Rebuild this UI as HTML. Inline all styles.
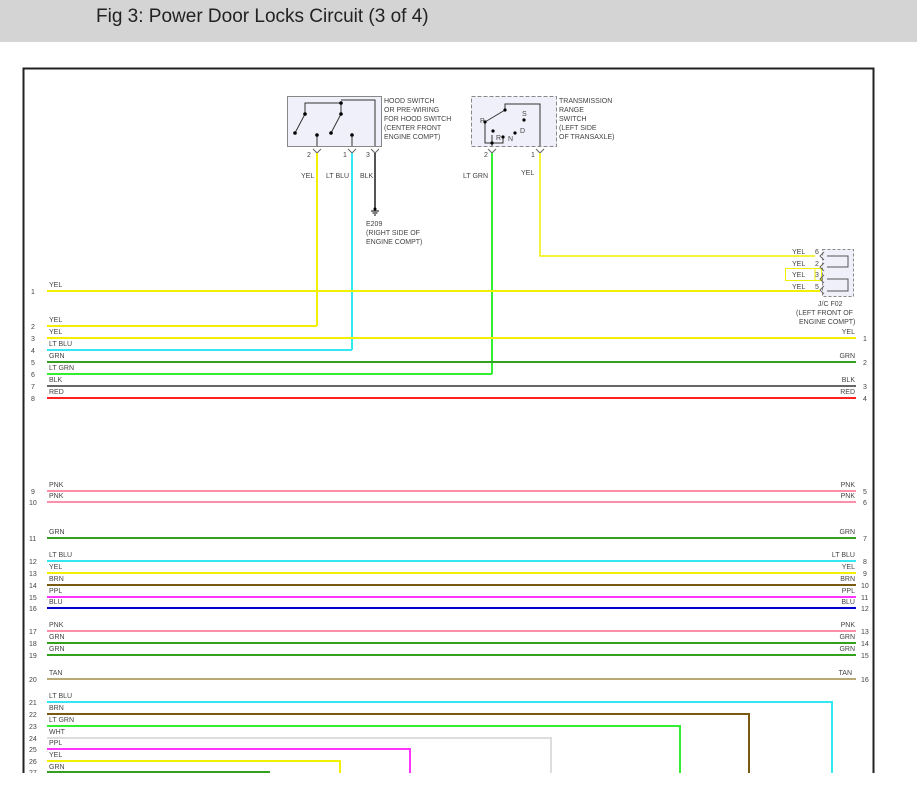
<!DOCTYPE html>
<html><head><meta charset="utf-8"><style>
html,body{margin:0;padding:0;background:#fff;width:917px;height:800px;overflow:hidden}
.hdr{position:absolute;left:0;top:0;width:917px;height:42px;background:#d4d4d4}
.hdr span{position:absolute;left:96px;top:6px;font:19px "Liberation Sans",sans-serif;color:#222}
svg{position:absolute;left:0;top:0}
text{font-family:"Liberation Sans",sans-serif;font-size:7px;fill:#444}
</style></head><body>
<div class="hdr"><span>Fig 3: Power Door Locks Circuit (3 of 4)</span></div>
<svg width="917" height="800" viewBox="0 0 917 800">
<defs><clipPath id="c"><rect x="0" y="0" width="917" height="773"/></clipPath></defs>
<g clip-path="url(#c)">
<rect x="23.5" y="68.5" width="850" height="760" fill="none" stroke="#222" stroke-width="2"/>
<rect x="287.5" y="96.5" width="94" height="50" fill="#f0f0fa" stroke="#888"/>
<g stroke="#333" stroke-width="1" fill="none">
<path d="M305 114 V103 H341 V114 M305 114 L295 133 M341 103 V114 L331 133 M317 135 V146 M352 135 V146 M375 146 V100 H341"/>
</g>
<g fill="#000"><circle cx="305" cy="114" r="1.8"/><circle cx="341" cy="103" r="1.8"/><circle cx="341" cy="114" r="1.8"/><circle cx="295" cy="133" r="1.8"/><circle cx="331" cy="133" r="1.8"/><circle cx="317" cy="135" r="1.8"/><circle cx="352" cy="135" r="1.8"/></g>
<g font-size="7"><text x="384" y="103">HOOD SWITCH</text><text x="384" y="112">OR PRE-WIRING</text><text x="384" y="121">FOR HOOD SWITCH</text><text x="384" y="130">(CENTER FRONT</text><text x="384" y="139">ENGINE COMPT)</text>
<text x="307" y="157">2</text><text x="343" y="157">1</text><text x="366" y="157">3</text>
<text x="301" y="178">YEL</text><text x="326" y="178">LT BLU</text><text x="360" y="178">BLK</text>
<text x="366" y="226">E209</text><text x="366" y="235">(RIGHT SIDE OF</text><text x="366" y="244">ENGINE COMPT)</text></g>
<g stroke="#666" fill="none"><path d="M313 149 l4 4 l4 -4 M348 149 l4 4 l4 -4 M371 149 l4 4 l4 -4"/></g>
<rect x="471.5" y="96.5" width="85" height="50" fill="#f0f0fa" stroke="#888" stroke-dasharray="4,2"/>
<g stroke="#333" fill="none"><path d="M485 122 V143 H492 V146 M485 122 L505 110 V104 H540 V146 M492 135 V146 M492 143 H503 V137"/></g>
<g fill="#000"><circle cx="485" cy="122" r="1.6"/><circle cx="505" cy="110" r="1.6"/><circle cx="524" cy="120" r="1.6"/><circle cx="493" cy="131" r="1.6"/><circle cx="503" cy="137" r="1.6"/><circle cx="515" cy="133" r="1.6"/><circle cx="492" cy="143" r="1.6"/></g>
<g font-size="7"><text x="480" y="123">P</text><text x="522" y="116">S</text><text x="496" y="140">R</text><text x="508" y="141">N</text><text x="520" y="133">D</text>
<text x="559" y="103">TRANSMISSION</text><text x="559" y="112">RANGE</text><text x="559" y="121">SWITCH</text><text x="559" y="130">(LEFT SIDE</text><text x="559" y="139">OF TRANSAXLE)</text>
<text x="484" y="157">2</text><text x="531" y="157">1</text><text x="463" y="178">LT GRN</text><text x="521" y="175">YEL</text></g>
<g stroke="#666" fill="none"><path d="M488 149 l4 4 l4 -4 M536 149 l4 4 l4 -4"/></g>
<line x1="317" y1="153" x2="317" y2="326" stroke="#f0f000" stroke-width="2"/>
<line x1="352" y1="153" x2="352" y2="350" stroke="#33e8f0" stroke-width="2"/>
<line x1="375" y1="153" x2="375" y2="208" stroke="#555" stroke-width="2"/>
<path d="M371 211 h8 M372.5 213 h5 M374 215 h2" stroke="#000"/>
<circle cx="375" cy="209" r="1.5"/>
<line x1="492" y1="153" x2="492" y2="374" stroke="#33ee33" stroke-width="2"/>
<path d="M540 153 V256 H815" stroke="#f0f000" stroke-width="1.5" fill="none"/>
<rect x="822.5" y="249.5" width="31" height="47" fill="#f0f0fa" stroke="#888" stroke-dasharray="3,2"/>
<path d="M827 256 H848 V267 H827 M827 279 H848 V291 H827" stroke="#555" fill="none"/>
<rect x="785.5" y="268.5" width="36" height="12" fill="none" stroke="#f0f000"/>
<g font-size="7"><text x="792" y="254">YEL</text><text x="815" y="254">6</text><text x="792" y="266">YEL</text><text x="815" y="266">2</text><text x="792" y="277">YEL</text><text x="815" y="277">3</text><text x="792" y="289">YEL</text><text x="815" y="289">5</text>
<text x="818" y="306">J/C F02</text><text x="796" y="315">(LEFT FRONT OF</text><text x="799" y="324">ENGINE COMPT)</text></g>
<g stroke="#666" fill="none"><path d="M824 252 l-4 4 l4 4 M824 263 l-4 4 l4 4 M824 275 l-4 4 l4 4 M824 286 l-4 4 l4 4"/></g>
<line x1="789" y1="291" x2="815" y2="291" stroke="#f0f000" stroke-width="1.5"/>
<line x1="815" y1="280" x2="815" y2="268" stroke="#f0f000"/>
<g stroke-width="2" fill="none">
<line x1="47" y1="291" x2="820" y2="291" stroke="#f0f000"/>
<line x1="47" y1="326" x2="317" y2="326" stroke="#f0f000"/>
<line x1="47" y1="338" x2="856" y2="338" stroke="#f0f000"/>
<line x1="47" y1="350" x2="352" y2="350" stroke="#33e8f0"/>
<line x1="47" y1="362" x2="856" y2="362" stroke="#33a020"/>
<line x1="47" y1="374" x2="492" y2="374" stroke="#33ee33"/>
<line x1="47" y1="386" x2="856" y2="386" stroke="#666"/>
<line x1="47" y1="398" x2="856" y2="398" stroke="#ff2020"/>
<line x1="47" y1="491" x2="856" y2="491" stroke="#ff8fa8"/>
<line x1="47" y1="502" x2="856" y2="502" stroke="#ff8fa8"/>
<line x1="47" y1="538" x2="856" y2="538" stroke="#33a020"/>
<line x1="47" y1="561" x2="856" y2="561" stroke="#33e8f0"/>
<line x1="47" y1="573" x2="856" y2="573" stroke="#f0f000"/>
<line x1="47" y1="585" x2="856" y2="585" stroke="#7a5a10"/>
<line x1="47" y1="597" x2="856" y2="597" stroke="#ff33ff"/>
<line x1="47" y1="608" x2="856" y2="608" stroke="#0000cc"/>
<line x1="47" y1="631" x2="856" y2="631" stroke="#ff8fa8"/>
<line x1="47" y1="643" x2="856" y2="643" stroke="#33a020"/>
<line x1="47" y1="655" x2="856" y2="655" stroke="#33a020"/>
<line x1="47" y1="679" x2="856" y2="679" stroke="#b8a878"/>
<path d="M47 702 H832 V780" stroke="#33e8f0"/>
<path d="M47 714 H749 V780" stroke="#7a5a10"/>
<path d="M47 726 H680 V780" stroke="#33ee33"/>
<path d="M47 738 H551 V780" stroke="#dddddd"/>
<path d="M47 749 H410 V780" stroke="#ff33ff"/>
<path d="M47 761 H340 V780" stroke="#f0f000"/>
<line x1="47" y1="772" x2="270" y2="772" stroke="#33a020"/>
</g>
<g font-size="7">
<text x="49" y="287">YEL</text><text x="49" y="322">YEL</text><text x="49" y="334">YEL</text><text x="49" y="346">LT BLU</text><text x="49" y="358">GRN</text><text x="49" y="370">LT GRN</text><text x="49" y="382">BLK</text><text x="49" y="394">RED</text>
<text x="49" y="487">PNK</text><text x="49" y="498">PNK</text><text x="49" y="534">GRN</text><text x="49" y="557">LT BLU</text><text x="49" y="569">YEL</text><text x="49" y="581">BRN</text><text x="49" y="593">PPL</text><text x="49" y="604">BLU</text>
<text x="49" y="627">PNK</text><text x="49" y="639">GRN</text><text x="49" y="651">GRN</text><text x="49" y="675">TAN</text>
<text x="49" y="698">LT BLU</text><text x="49" y="710">BRN</text><text x="49" y="722">LT GRN</text><text x="49" y="734">WHT</text><text x="49" y="745">PPL</text><text x="49" y="757">YEL</text><text x="49" y="769">GRN</text>
<g text-anchor="end"><text x="855" y="334">YEL</text><text x="855" y="358">GRN</text><text x="855" y="382">BLK</text><text x="855" y="394">RED</text><text x="855" y="487">PNK</text><text x="855" y="498">PNK</text><text x="855" y="534">GRN</text><text x="855" y="557">LT BLU</text><text x="855" y="569">YEL</text><text x="855" y="581">BRN</text><text x="855" y="593">PPL</text><text x="855" y="604">BLU</text><text x="855" y="627">PNK</text><text x="855" y="639">GRN</text><text x="855" y="651">GRN</text><text x="852" y="675">TAN</text></g>
<g fill="#555"><text x="31" y="294">1</text><text x="31" y="329">2</text><text x="31" y="341">3</text><text x="31" y="353">4</text><text x="31" y="365">5</text><text x="31" y="377">6</text><text x="31" y="389">7</text><text x="31" y="401">8</text><text x="31" y="494">9</text><text x="29" y="505">10</text><text x="29" y="541">11</text><text x="29" y="564">12</text><text x="29" y="576">13</text><text x="29" y="588">14</text><text x="29" y="600">15</text><text x="29" y="611">16</text><text x="29" y="634">17</text><text x="29" y="646">18</text><text x="29" y="658">19</text><text x="29" y="682">20</text><text x="29" y="705">21</text><text x="29" y="717">22</text><text x="29" y="729">23</text><text x="29" y="741">24</text><text x="29" y="752">25</text><text x="29" y="764">26</text><text x="29" y="775">27</text>
<text x="863" y="341">1</text><text x="863" y="365">2</text><text x="863" y="389">3</text><text x="863" y="401">4</text><text x="863" y="494">5</text><text x="863" y="505">6</text><text x="863" y="541">7</text><text x="863" y="564">8</text><text x="863" y="576">9</text><text x="861" y="588">10</text><text x="861" y="600">11</text><text x="861" y="611">12</text><text x="861" y="634">13</text><text x="861" y="646">14</text><text x="861" y="658">15</text><text x="861" y="682">16</text></g>
</g>
</g>
</svg>
</body></html>
